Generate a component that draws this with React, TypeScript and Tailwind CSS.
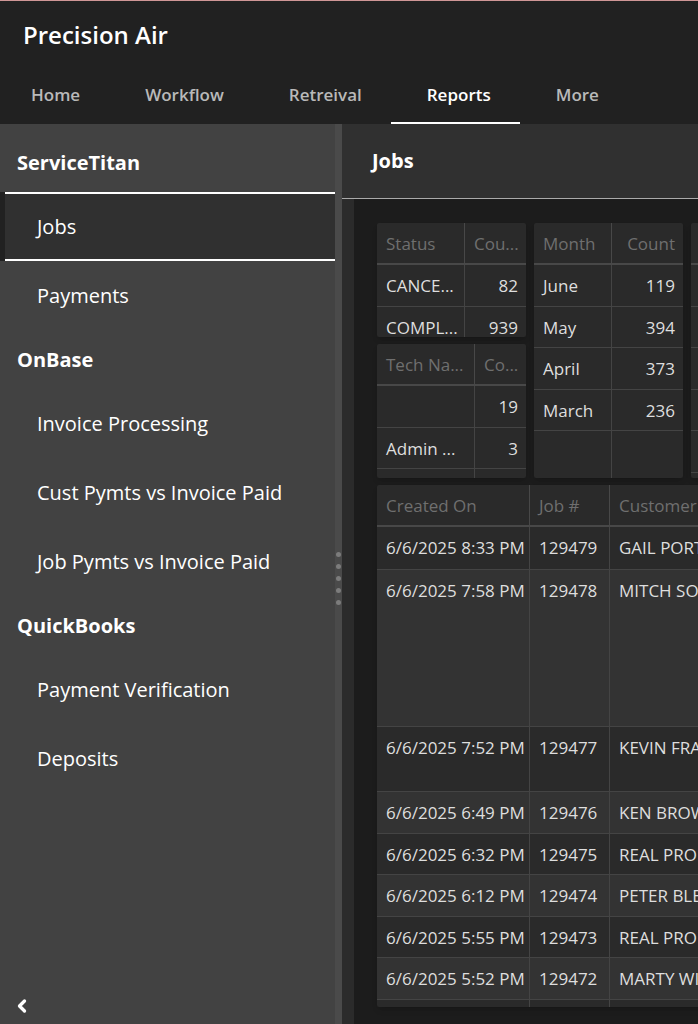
import React from "react";
import { ChevronLeft } from "lucide-react";

const tabs = ["Home", "Workflow", "Retreival", "Reports", "More"];

const sections = [
  { title: "ServiceTitan", items: ["Jobs", "Payments"] },
  { title: "OnBase", items: ["Invoice Processing", "Cust Pymts vs Invoice Paid", "Job Pymts vs Invoice Paid"] },
  { title: "QuickBooks", items: ["Payment Verification", "Deposits"] },
];

type Column = { label: string; width: string; numeric?: boolean };
type Row = { cells: string[]; height: string };

const TALL = "h-[42px]";
const SHORT = "h-[41px]";

const statusRows: Row[] = [
  { cells: ["CANCE...", "82"], height: TALL },
  { cells: ["COMPL...", "939"], height: SHORT },
];

const techRows: Row[] = [
  { cells: ["", "19"], height: TALL },
  { cells: ["Admin ...", "3"], height: SHORT },
  { cells: ["", ""], height: TALL },
];

const monthRows: Row[] = [
  { cells: ["June", "119"], height: TALL },
  { cells: ["May", "394"], height: SHORT },
  { cells: ["April", "373"], height: TALL },
  { cells: ["March", "236"], height: SHORT },
  { cells: ["", ""], height: "h-[60px]" },
];

const extraRows: Row[] = [
  { cells: [""], height: TALL },
  { cells: [""], height: SHORT },
  { cells: [""], height: TALL },
  { cells: [""], height: SHORT },
  { cells: [""], height: TALL },
];

const jobRows: Row[] = [
  { cells: ["6/6/2025 8:33 PM", "129479", "GAIL PORT"], height: "h-[43px]" },
  { cells: ["6/6/2025 7:58 PM", "129478", "MITCH SO"], height: "h-[157px]" },
  { cells: ["6/6/2025 7:52 PM", "129477", "KEVIN FRA"], height: "h-[65px]" },
  { cells: ["6/6/2025 6:49 PM", "129476", "KEN BROW"], height: TALL },
  { cells: ["6/6/2025 6:32 PM", "129475", "REAL PROP"], height: SHORT },
  { cells: ["6/6/2025 6:12 PM", "129474", "PETER BLE"], height: TALL },
  { cells: ["6/6/2025 5:55 PM", "129473", "REAL PROP"], height: SHORT },
  { cells: ["6/6/2025 5:52 PM", "129472", "MARTY WI"], height: TALL },
  { cells: ["", "", ""], height: SHORT },
];

function DataTable({ columns, rows, striped }: { columns: Column[]; rows: Row[]; striped?: boolean }) {
  return (
    <table className="w-full table-fixed border-separate border-spacing-0 text-[17px] leading-6 whitespace-nowrap">
      <thead>
        <tr className="h-[42px]">
          {columns.map((c, i) => (
            <th
              key={i}
              className={`${c.width} ${c.numeric ? "text-right" : "text-left"} overflow-hidden border-b-2 border-[#484848] pt-0.5 pr-2 pb-0 pl-[9px] font-normal text-[#6f6f6f] not-last:border-r`}
            >
              {c.label}
            </th>
          ))}
        </tr>
      </thead>
      <tbody>
        {rows.map((r, i) => (
          <tr key={i} className={`${r.height} ${striped && i % 2 === 1 ? "bg-[#333333]" : ""}`}>
            {r.cells.map((cell, j) => (
              <td
                key={j}
                className={`${columns[j].numeric ? "pr-2 pl-0 text-right" : "pr-0 pl-[9px]"} border-b border-[#444444] pt-[9px] pb-0 align-top text-[#dedede] not-last:border-r`}
              >
                {cell}
              </td>
            ))}
          </tr>
        ))}
      </tbody>
    </table>
  );
}

function Card({ className, children }: { className: string; children: React.ReactNode }) {
  return <div className={`overflow-hidden rounded-[2px] bg-[#2a2a2a] shadow-md ${className}`}>{children}</div>;
}

export default function App() {
  return (
    <div className="flex h-screen min-h-[600px] flex-col overflow-hidden border-t border-[#cf9696] bg-[#212121] font-['Open_Sans','Noto_Sans',sans-serif] text-white">
      <header className="shrink-0">
        <h1 className="px-[23px] pt-4 text-2xl leading-9 font-semibold">Precision Air</h1>
        <nav aria-label="Main" className="-ml-[5px] flex pt-3">
          {tabs.map((t) => (
            <a
              key={t}
              href="#"
              aria-current={t === "Reports" ? "page" : undefined}
              className={`flex h-[59px] items-center border-b-2 pt-0.5 pr-[29px] pl-9 text-[17px] font-semibold ${
                t === "Reports" ? "border-white text-white" : "border-transparent text-[#b9b9b9]"
              }`}
            >
              {t}
            </a>
          ))}
        </nav>
      </header>

      <div className="flex min-h-0 flex-1">
        <aside className="flex w-[335px] shrink-0 flex-col bg-[#424242] pt-[9px]">
          {sections.map((s) => (
            <section key={s.title}>
              <h2 className="flex h-[59px] items-center px-[17px] text-xl font-bold">{s.title}</h2>
              <ul>
                {s.items.map((item) => (
                  <li key={item}>
                    <a
                      href="#"
                      className={`flex h-[69px] items-center text-xl ${
                        item === "Jobs" ? "bg-[#212121] pl-[5px]" : "pl-[37px]"
                      }`}
                    >
                      {item === "Jobs" ? (
                        <span className="flex h-full flex-1 items-center border-y-2 border-white bg-[#303030] pl-8">
                          {item}
                        </span>
                      ) : (
                        <span>{item}</span>
                      )}
                    </a>
                  </li>
                ))}
              </ul>
            </section>
          ))}
          <button aria-label="Collapse" className="mt-auto mb-2 ml-3 flex size-5 items-center justify-center">
            <ChevronLeft className="size-5" strokeWidth={4} />
          </button>
        </aside>

        <div className="flex w-[7px] shrink-0 flex-col items-center justify-center gap-[7px] bg-[#4a4a4a] pt-2">
          {[0, 1, 2, 3, 4].map((d) => (
            <span key={d} className="size-[5px] rounded-full bg-[#7c7c7c]" />
          ))}
        </div>

        <main className="flex min-w-0 flex-1 flex-col">
          <div className="flex h-[75px] shrink-0 items-center border-b border-[#aaaaaa] bg-[#303030] px-[30px]">
            <h2 className="text-xl font-bold">Jobs</h2>
          </div>
          <div className="min-h-0 flex-1 overflow-hidden border-l-[12px] border-[#2b2b2b] bg-[#1c1c1c] pt-6 pb-[17px] pl-[23px]">
            <div className="-mr-4 flex h-full flex-col gap-[7px]">
              <div className="flex h-[255px] shrink-0 gap-2">
                <div className="flex w-[149px] shrink-0 flex-col gap-[7px]">
                  <Card className="h-[114px]">
                    <DataTable
                      columns={[
                        { label: "Status", width: "w-[88px]" },
                        { label: "Cou...", width: "w-[61px]", numeric: true },
                      ]}
                      rows={statusRows}
                    />
                  </Card>
                  <Card className="h-[134px]">
                    <DataTable
                      columns={[
                        { label: "Tech Na...", width: "w-[98px]" },
                        { label: "Co...", width: "w-[51px]", numeric: true },
                      ]}
                      rows={techRows}
                    />
                  </Card>
                </div>
                <Card className="w-[149px] shrink-0">
                  <DataTable
                    columns={[
                      { label: "Month", width: "w-[78px]" },
                      { label: "Count", width: "w-[71px]", numeric: true },
                    ]}
                    rows={monthRows}
                  />
                </Card>
                <Card className="min-w-0 flex-1">
                  <DataTable columns={[{ label: "", width: "w-full" }]} rows={extraRows} />
                </Card>
              </div>
              <Card className="min-h-0 flex-1">
                <DataTable
                  striped
                  columns={[
                    { label: "Created On", width: "w-[153px]" },
                    { label: "Job #", width: "w-[80px]" },
                    { label: "Customer", width: "w-auto" },
                  ]}
                  rows={jobRows}
                />
              </Card>
            </div>
          </div>
        </main>
      </div>
    </div>
  );
}
